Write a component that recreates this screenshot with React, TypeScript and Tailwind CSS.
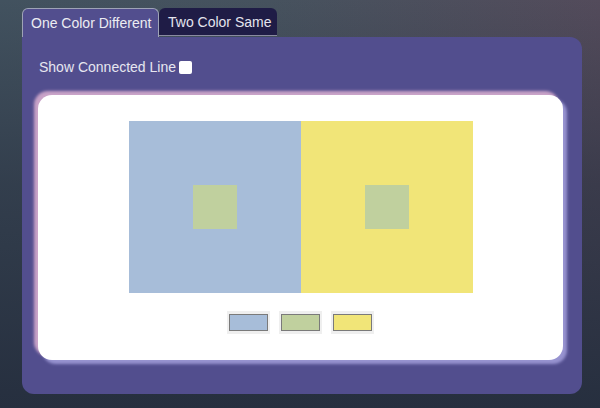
const swatches = ['#a7bdd9', '#c0d09e', '#f1e578'];

function ColorSwatch({ color }: { color: string }) {
  return (
    <div className="flex h-[23px] w-[43px] items-center justify-center bg-[#efefef]">
      <div className="h-[17px] w-[39px] border border-[#7a7a7a]" style={{ backgroundColor: color }} />
    </div>
  );
}

export default function App() {
  return (
    <div
      className="h-[408px] w-[600px] overflow-hidden bg-[linear-gradient(180deg,rgba(38,46,62,0)_0%,rgba(38,46,62,0.55)_45%,#262f3f_100%),linear-gradient(90deg,#42525f_0%,#46525e_45%,#534b5b_100%)] pl-[22px] pt-[8px]"
      style={{ fontFamily: '"Liberation Sans", Arial, sans-serif' }}
    >
      {/* tabs */}
      <div className="flex items-start">
        <div className="flex h-[29px] w-[137px] items-center rounded-t-[6px] border border-b-0 border-[#9ea3b6] bg-[#524e8e] pl-[8px] pt-[1px] text-[14px] text-[#ececf2]">
          One Color Different
        </div>
        <div className="flex h-[28px] w-[118px] items-center rounded-t-[6px] border-b border-[#8a8aa0] bg-[#1f1c46] pl-[9px] pt-[1px] text-[14px] text-[#e4e4ee]">
          Two Color Same
        </div>
      </div>

      {/* panel */}
      <div className="h-[357px] w-[560px] rounded-[12px] rounded-tl-none bg-[#524e8e] pl-[16px] pt-[20px]">
        <label className="flex items-center gap-[3px] pl-[1px] text-[14px] text-[#e6e6f0]">
          Show Connected Line
          <span className="block h-[13px] w-[13px] rounded-[2px] bg-white" />
        </label>

        <div className="mt-[17px] flex h-[265px] w-[525px] flex-col items-center rounded-[14px] bg-white pt-[26px] shadow-[-4px_-4px_3px_#c9a3c8,4px_4px_3px_#9793d0]">
          <div className="flex">
            <div className="flex h-[172px] w-[172px] items-center justify-center bg-[#a7bdd9]">
              <div className="h-[44px] w-[44px] bg-[#c0d09e]" />
            </div>
            <div className="flex h-[172px] w-[172px] items-center justify-center bg-[#f1e578]">
              <div className="h-[44px] w-[44px] bg-[#c0d09e]" />
            </div>
          </div>

          <div className="mt-[18px] flex gap-[9px]">
            {swatches.map((c) => (
              <ColorSwatch key={c} color={c} />
            ))}
          </div>
        </div>
      </div>
    </div>
  );
}
